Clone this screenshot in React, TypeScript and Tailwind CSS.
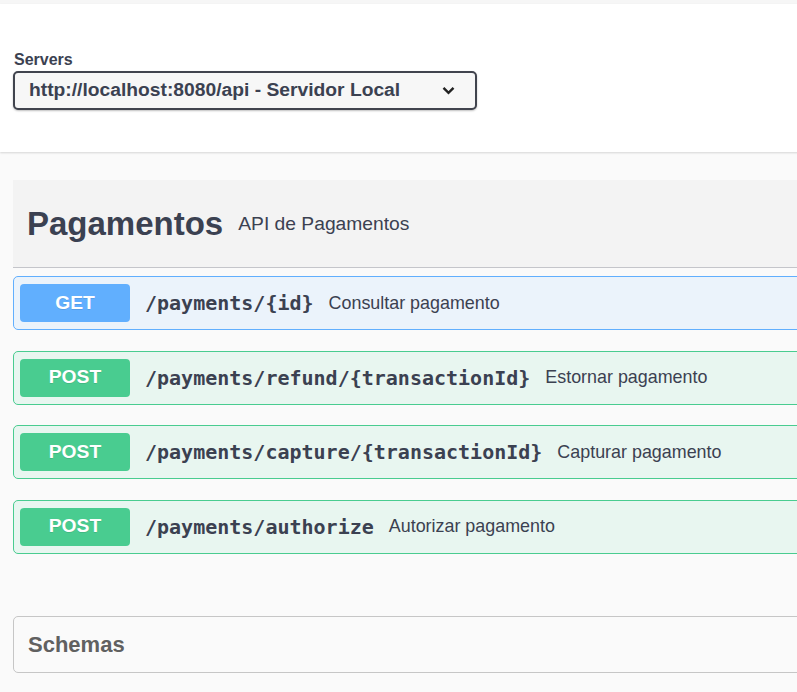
import React from "react";

type Op = {
  method: "GET" | "POST";
  path: string;
  summary: string;
};

const ops: Op[] = [
  { method: "GET", path: "/payments/{id}", summary: "Consultar pagamento" },
  { method: "POST", path: "/payments/refund/{transactionId}", summary: "Estornar pagamento" },
  { method: "POST", path: "/payments/capture/{transactionId}", summary: "Capturar pagamento" },
  { method: "POST", path: "/payments/authorize", summary: "Autorizar pagamento" },
];

function OpRow({ op }: { op: Op }) {
  const isGet = op.method === "GET";
  return (
    <div
      className={
        isGet
          ? "flex h-[54px] items-center rounded-[5px] border border-[#61affe] bg-[#ebf3fb] pl-[6px]"
          : "flex h-[54px] items-center rounded-[5px] border border-[#49cc90] bg-[#e8f6f0] pl-[6px]"
      }
    >
      <span
        className={
          isGet
            ? "flex h-[38px] w-[110px] items-center justify-center rounded-[4px] bg-[#61affe] text-[19.25px] font-bold text-white [text-shadow:0_1px_0_rgba(0,0,0,0.1)]"
            : "flex h-[38px] w-[110px] items-center justify-center rounded-[4px] bg-[#49cc90] text-[19.25px] font-bold text-white [text-shadow:0_1px_0_rgba(0,0,0,0.1)]"
        }
      >
        {op.method}
      </span>
      <span className="ml-[15px] font-['DejaVu_Sans_Mono',monospace] text-[20px] font-bold text-[#3b4151]">
        {op.path}
      </span>
      <span className="ml-[15px] text-[17.9px] text-[#3b4151]">{op.summary}</span>
    </div>
  );
}

export default function App() {
  return (
    <div className="h-[692px] w-[797px] overflow-hidden bg-[#fafafa] font-['Liberation_Sans',Arial,sans-serif] text-[#3b4151]">
      <div className="w-[1100px]">
        <div className="h-[4px] bg-[#f6f6f6]" />

        {/* servers */}
        <section className="h-[148px] bg-white pl-[13px] pt-[46px] shadow-[0_1px_2px_0_rgba(0,0,0,0.15)]">
          <div className="pl-[1px] text-[16px] font-bold leading-[20px]">Servers</div>
          <div className="mt-[1px] flex h-[39px] w-[464px] items-center justify-between rounded-[5px] border-2 border-[#41444e] bg-[#f7f7f7] pl-[14px] pr-[20px] shadow-[0_1px_2px_0_rgba(0,0,0,0.25)]">
            <span className="text-[19.25px] font-bold">http://localhost:8080/api - Servidor Local</span>
            <svg width="13" height="9" viewBox="0 0 13 9" fill="none">
              <path d="M1.5 1.8 L6.5 6.8 L11.5 1.8" stroke="#222" strokeWidth="2.4" />
            </svg>
          </div>
        </section>

        <main className="pl-[13px] pt-[28px]">
          {/* tag */}
          <div className="flex h-[88px] items-center border-b border-[#c4c5ca] bg-[#f3f3f3] pl-[14px]">
            <h3 className="text-[33px] font-bold">Pagamentos</h3>
            <span className="ml-[15px] mt-[2px] text-[19.25px]">API de Pagamentos</span>
          </div>

          <div className="mt-[8px] flex flex-col gap-[20.5px]">
            {ops.map((op) => (
              <OpRow key={op.path} op={op} />
            ))}
          </div>

          {/* models */}
          <div className="mt-[62px] flex h-[57px] items-center rounded-[5px] border border-[#c6c6c6] bg-[#fafafa] pl-[14px]">
            <h4 className="text-[22px] font-bold text-[#606060]">Schemas</h4>
          </div>
        </main>
      </div>
    </div>
  );
}
